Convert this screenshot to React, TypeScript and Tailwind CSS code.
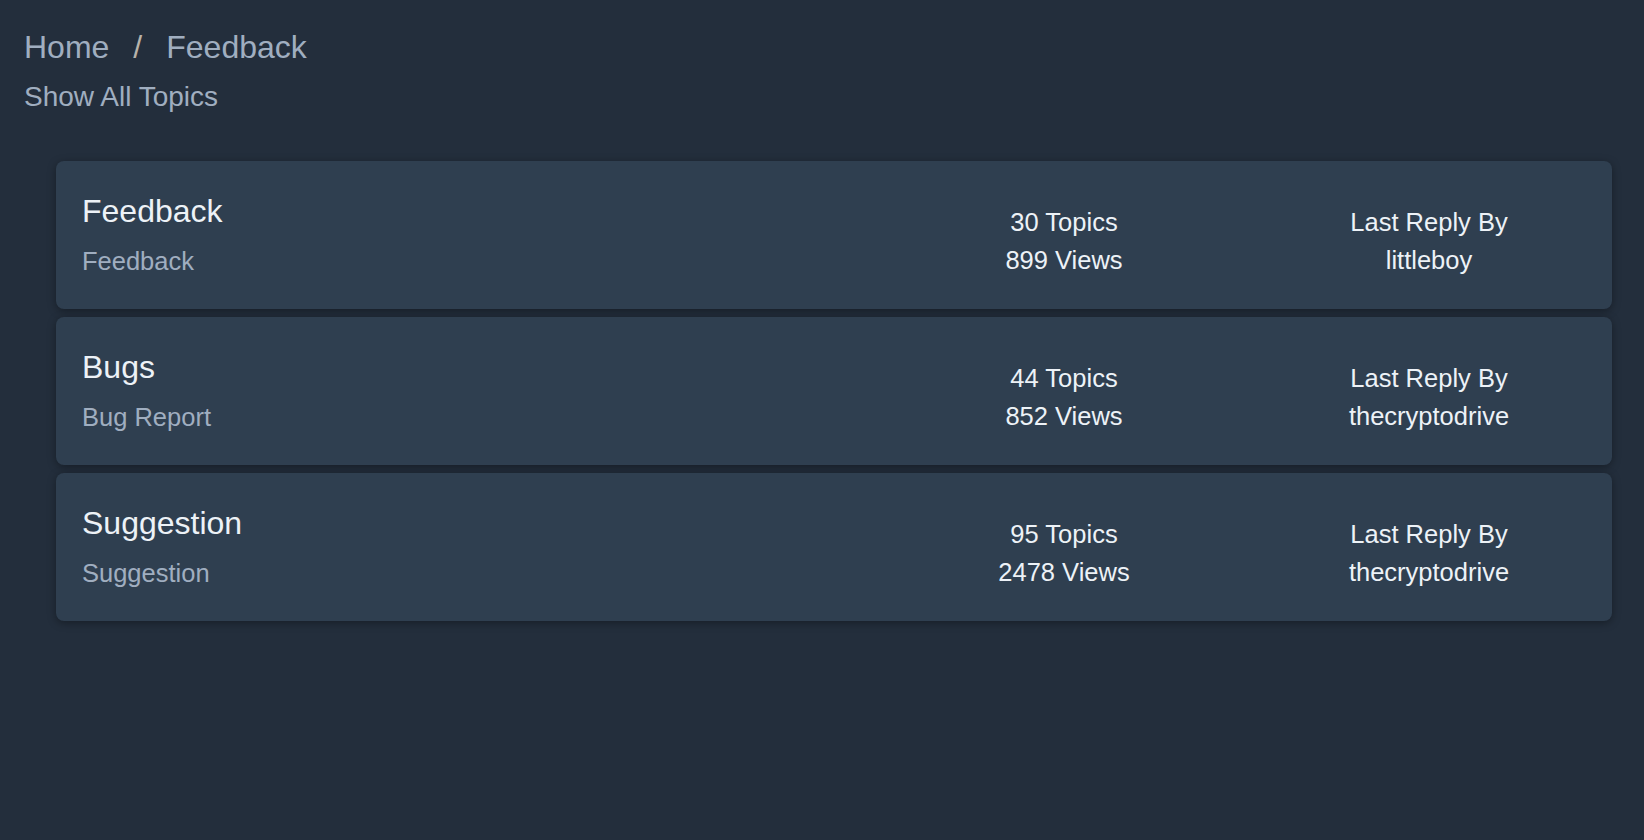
import React from 'react'

type Forum = {
  title: string
  desc: string
  topics: number
  views: number
  lastBy: string
}

const forums: Forum[] = [
  { title: 'Feedback', desc: 'Feedback', topics: 30, views: 899, lastBy: 'littleboy' },
  { title: 'Bugs', desc: 'Bug Report', topics: 44, views: 852, lastBy: 'thecryptodrive' },
  { title: 'Suggestion', desc: 'Suggestion', topics: 95, views: 2478, lastBy: 'thecryptodrive' },
]

const ForumCard = ({ forum }: { forum: Forum }) => {
  return (
    <div className="flex h-[148px] rounded-lg bg-[#2f3f50] pl-[26px] pr-6 shadow-[0_2px_8px_rgba(0,0,0,0.35)]">
      <div className="flex-1 pt-[30px]">
        <h3 className="text-[32px] leading-[40px] text-[#edf2f7]">{forum.title}</h3>
        <p className="mt-[11px] text-[25.5px] leading-[38px] text-[#a0aec0]">{forum.desc}</p>
      </div>
      <div className="w-[412px] pt-[42px] text-center text-[25.5px] leading-[38px] text-[#edf2f7]">
        <div>{forum.topics} Topics</div>
        <div>{forum.views} Views</div>
      </div>
      <div className="w-[318px] pt-[42px] text-center text-[25.5px] leading-[38px] text-[#edf2f7]">
        <div>Last Reply By</div>
        <div>{forum.lastBy}</div>
      </div>
    </div>
  )
}

export default function App() {
  return (
    <div className="min-h-screen bg-[#232e3c] font-['Liberation_Sans',Arial,sans-serif]">
      <header className="pl-[24px] pt-[27px]">
        <nav className="flex items-center text-[32px] leading-[40px] text-[#a0aec0]">
          <span>Home</span>
          <span className="mx-[24px] text-[#b7b2aa]">/</span>
          <span>Feedback</span>
        </nav>
        <div className="mt-[12px] text-[28px] leading-[36px] text-[#a0aec0]">Show All Topics</div>
      </header>
      <main className="mt-[46px] flex flex-col gap-2 pl-[56px] pr-[32px]">
        {forums.map((f) => (
          <ForumCard key={f.title} forum={f} />
        ))}
      </main>
    </div>
  )
}
